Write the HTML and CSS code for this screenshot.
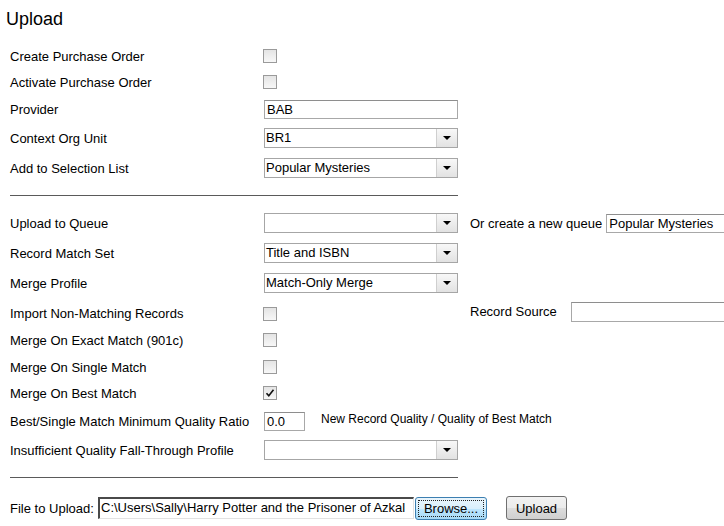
FILE: index.html
```html
<!DOCTYPE html>
<html>
<head>
<meta charset="utf-8">
<title>Upload</title>
<link rel="stylesheet" href="styles.css">
</head>
<body>
<div class="page">
  <h1 class="title">Upload</h1>
  <div class="form">
    <div class="row h27"><span class="lbl">Create Purchase Order</span><div class="ctl"><span class="cb"></span></div></div>
    <div class="row h26"><span class="lbl">Activate Purchase Order</span><div class="ctl"><span class="cb"></span></div></div>
    <div class="row h28"><span class="lbl">Provider</span><div class="ctl"><span class="txt w194">BAB</span></div></div>
    <div class="row h30"><span class="lbl">Context Org Unit</span><div class="ctl"><span class="sel"><span class="val">BR1</span><span class="arr"><i></i></span></span></div></div>
    <div class="row h30"><span class="lbl">Add to Selection List</span><div class="ctl"><span class="sel"><span class="val">Popular Mysteries</span><span class="arr"><i></i></span></span></div></div>

    <div class="rule"></div>

    <div class="row h30"><span class="lbl">Upload to Queue</span><div class="ctl"><span class="sel"><span class="val"></span><span class="arr"><i></i></span></span></div>
      <div class="extra"><span class="xlbl">Or create a new queue</span><span class="txt wq">Popular Mysteries</span></div></div>
    <div class="row h30"><span class="lbl">Record Match Set</span><div class="ctl"><span class="sel"><span class="val">Title and ISBN</span><span class="arr"><i></i></span></span></div></div>
    <div class="row h30"><span class="lbl">Merge Profile</span><div class="ctl"><span class="sel"><span class="val">Match-Only Merge</span><span class="arr"><i></i></span></span></div></div>
    <div class="row h29"><span class="lbl">Import Non-Matching Records</span><div class="ctl"><span class="cb cb-low"></span></div>
      <div class="extra"><span class="xlbl src">Record Source</span><span class="txt wsrc"></span></div></div>
    <div class="row h26"><span class="lbl">Merge On Exact Match (901c)</span><div class="ctl"><span class="cb"></span></div></div>
    <div class="row h27"><span class="lbl">Merge On Single Match</span><div class="ctl"><span class="cb"></span></div></div>
    <div class="row h26"><span class="lbl">Merge On Best Match</span><div class="ctl"><span class="cb"><svg width="10" height="10" viewBox="0 0 10 10"><path d="M1.5 5.2 L3.8 7.8 L8.5 1.8" fill="none" stroke="#111" stroke-width="1.6"/></svg></span></div></div>
    <div class="row h29"><span class="lbl">Best/Single Match Minimum Quality Ratio</span><div class="ctl ctl-wide"><span class="txt w40">0.0</span><span class="note">New Record Quality / Quality of Best Match</span></div></div>
    <div class="row h30"><span class="lbl">Insufficient Quality Fall-Through Profile</span><div class="ctl"><span class="sel"><span class="val"></span><span class="arr"><i></i></span></span></div></div>

    <div class="rule rule2"></div>

    <div class="filerow">
      <span class="flbl">File to Upload:</span>
      <span class="filebox">C:\Users\Sally\Harry Potter and the Prisoner of Azkal</span>
      <span class="btn browse"><span class="focus">Browse...</span></span>
      <span class="btn upload">Upload</span>
    </div>
  </div>
</div>
</body>
</html>
```

FILE: styles.css
```css
html, body {
  margin: 0;
  padding: 0;
  overflow: hidden;
  background: #fff;
}
body {
  font-family: "Liberation Sans", Arial, sans-serif;
  font-size: 13px;
  color: #000;
  width: 724px;
  height: 526px;
}
.page {
  padding-top: 8px;
}
.title {
  margin: 0 0 12px 6px;
  font-size: 18px;
  font-weight: normal;
  line-height: 22px;
  height: 22px;
}
.form {
  padding-left: 10px;
}
.row {
  display: grid;
  grid-template-columns: 254px 206px max-content;
  align-items: center;
}
.h26 { height: 26px; }
.h27 { height: 27px; }
.h28 { height: 28px; }
.h29 { height: 29px; }
.h30 { height: 30px; }
.lbl {
  white-space: nowrap;
  padding-top: 1px;
}
.ctl {
  display: flex;
  align-items: center;
}
.ctl-wide {
  grid-column: 2 / 4;
}
.cb {
  display: inline-flex;
  align-items: center;
  justify-content: center;
  box-sizing: border-box;
  width: 14px;
  height: 14px;
  margin-left: -1px;
  border: 1px solid #9a9a9a;
  background: linear-gradient(#e4e4e4, #f7f7f7);
}
.cb svg { display: block; }
.cb-low { margin-top: 2px; }
.txt {
  display: inline-block;
  box-sizing: border-box;
  height: 19px;
  line-height: 17px;
  padding: 0 2px;
  border: 1px solid #a8a8a8;
  border-top-color: #8e8e8e;
  background: #fff;
  white-space: nowrap;
  overflow: hidden;
}
.w194 { width: 194px; }
.w40 { width: 41px; margin-top: 1px; }
.wq { width: 130px; }
.wsrc { width: 160px; height: 20px; }
.sel {
  display: inline-flex;
  box-sizing: border-box;
  width: 194px;
  height: 20px;
  border: 1px solid #a6a6a6;
  background: #fff;
}
.sel .val {
  flex: 1;
  line-height: 18px;
  padding-left: 1px;
  white-space: nowrap;
}
.sel .arr {
  width: 20px;
  border-left: 1px solid #cfcfcf;
  background: linear-gradient(#f8f8f8, #e2e2e2);
  display: flex;
  align-items: center;
  justify-content: center;
}
.sel .arr i {
  display: block;
  width: 0;
  height: 0;
  border-left: 4px solid transparent;
  border-right: 4px solid transparent;
  border-top: 4px solid #000;
}
.extra {
  display: flex;
  align-items: center;
}
.xlbl {
  margin-right: 4px;
  white-space: nowrap;
}
.xlbl.src {
  width: 88px;
  margin-right: 13px;
  margin-top: -2px;
}
.wsrc { margin-top: -2px; }
.note {
  font-size: 12px;
  margin-left: 16px;
  margin-top: -3px;
  white-space: nowrap;
}
.rule {
  width: 448px;
  height: 0;
  border-top: 1px solid #5a5a5a;
  margin: 12px 0 12px 0;
}
.rule2 {
  margin: 12px 0 0 0;
}
.filerow {
  display: flex;
  align-items: center;
  padding-top: 18px;
  height: 24px;
}
.flbl {
  width: 88px;
  white-space: nowrap;
}
.filebox {
  box-sizing: border-box;
  width: 316px;
  height: 22px;
  line-height: 18px;
  padding-left: 1px;
  border-style: solid;
  border-width: 2px 1px 1px 2px;
  border-color: #4a4a4a #e2e2e2 #e2e2e2 #4a4a4a;
  background: #fff;
  white-space: nowrap;
  overflow: hidden;
}
.btn {
  display: inline-flex;
  align-items: center;
  justify-content: center;
  box-sizing: border-box;
  border-radius: 3px;
  white-space: nowrap;
}
.browse {
  width: 72px;
  height: 23px;
  margin-left: 1px;
  border: 1px solid #3c7fb1;
  background: linear-gradient(#e9f5fc 0%, #d9effc 50%, #bee6fd 51%, #a7d9f5 100%);
  padding: 2px;
}
.browse .focus {
  display: flex;
  align-items: center;
  justify-content: center;
  width: 100%;
  height: 100%;
  box-sizing: border-box;
  border: 1px dotted #222;
}
.upload {
  width: 61px;
  height: 24px;
  margin-left: 19px;
  border: 1px solid #707070;
  background: linear-gradient(#f2f2f2 0%, #ebebeb 50%, #dddddd 51%, #cfcfcf 100%);
  font-size: 13px;
}
```
